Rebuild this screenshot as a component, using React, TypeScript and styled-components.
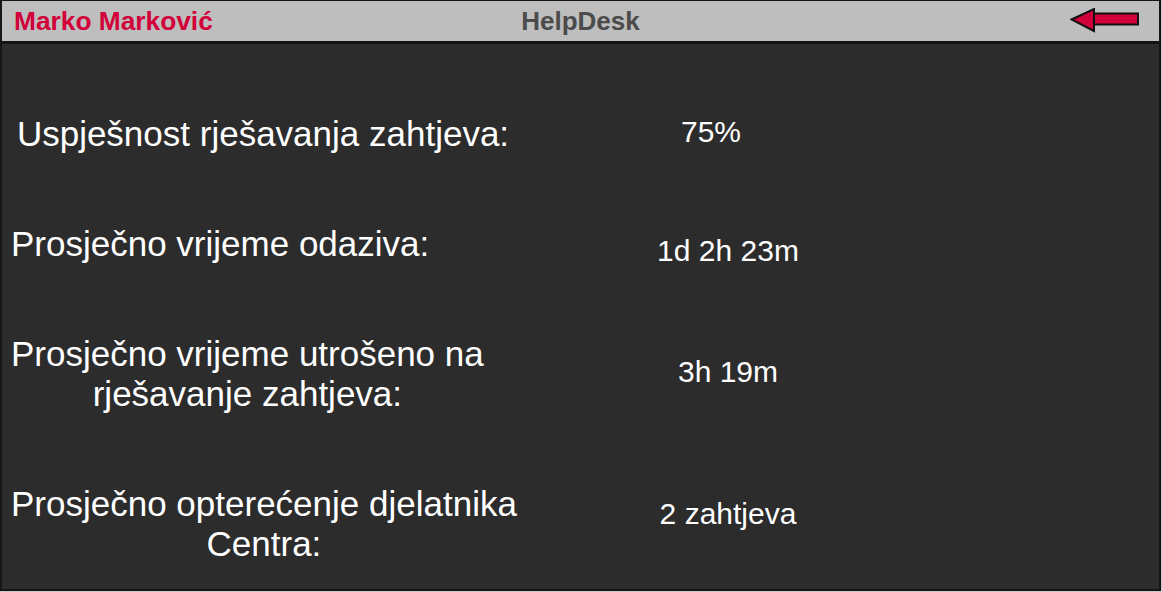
import React from "react";
import styled, { createGlobalStyle } from "styled-components";

const Global = createGlobalStyle`
  html, body { margin: 0; padding: 0; background: #c9c9c9; }
  body { font-family: "Liberation Sans", Arial, sans-serif; }
`;

const Frame = styled.div`
  box-sizing: border-box;
  width: 1161px;
  height: 591px;
  border: 2px solid #151515;
  border-top-width: 1px;
  display: flex;
  flex-direction: column;
  background: #2c2c2c;
`;

const Header = styled.header`
  box-sizing: border-box;
  height: 43px;
  flex: none;
  background: #bebebe;
  border-bottom: 3px solid #141414;
  display: grid;
  grid-template-columns: 1fr auto 1fr;
  align-items: center;
  padding: 0 12px;
`;

const UserName = styled.div`
  font-size: 26.3px;
  font-weight: bold;
  color: #d2003a;
  line-height: 30px;
`;

const AppTitle = styled.div`
  font-size: 26px;
  font-weight: bold;
  color: #4b4b4b;
  line-height: 30px;
`;

const BackButton = styled.button`
  justify-self: end;
  background: none;
  border: 0;
  padding: 0;
  margin: 0 7px 0 0;
  display: flex;
  cursor: pointer;
`;

const Body = styled.main`
  flex: 1;
  display: flex;
  flex-direction: column;
  padding: 0 0 0 9px;
`;

const Row = styled.div<{ $space: number }>`
  display: grid;
  grid-template-columns: 617px 200px;
  align-items: start;
  margin-top: ${(p) => p.$space}px;
`;

const Label = styled.div<{ $width?: number }>`
  justify-self: start;
  width: ${(p) => (p.$width ? `${p.$width}px` : "max-content")};
  font-size: 35px;
  line-height: 40px;
  color: #ffffff;
  text-align: center;
`;

const Value = styled.div<{ $top: number; $shift?: number }>`
  margin-top: ${(p) => p.$top}px;
  padding-right: ${(p) => (p.$shift ? p.$shift * 2 : 0)}px;
  font-size: 30px;
  line-height: 34px;
  color: #ffffff;
  text-align: center;
  white-space: nowrap;
`;

const BackArrow = () => (
  <svg width="70" height="26" viewBox="0 0 70 26">
    <rect x="24" y="5.5" width="44" height="11" fill="#d2003a" stroke="#111" strokeWidth="2" />
    <polygon points="1.5,11.5 24,1 24,23" fill="#d2003a" stroke="#111" strokeWidth="2" strokeLinejoin="miter" />
  </svg>
);

const stats = [
  { label: "Uspješnost rješavanja zahtjeva:", value: "75%", width: 504, top: 1, shift: 17, space: 70 },
  { label: "Prosječno vrijeme odaziva:", value: "1d 2h 23m", top: 10, space: 70 },
  { label: "Prosječno vrijeme utrošeno na\nrješavanje zahtjeva:", value: "3h 19m", top: 21, space: 66 },
  { label: "Prosječno opterećenje djelatnika\nCentra:", value: "2 zahtjeva", top: 13, space: 70 },
];

export default function App() {
  return (
    <>
      <Global />
      <Frame>
        <Header>
          <UserName>Marko Marković</UserName>
          <AppTitle>HelpDesk</AppTitle>
          <BackButton aria-label="Natrag">
            <BackArrow />
          </BackButton>
        </Header>
        <Body>
          {stats.map((s) => (
            <Row key={s.label} $space={s.space}>
              <Label $width={s.width}>
                {s.label.split("\n").map((line, i) => (
                  <div key={i}>{line}</div>
                ))}
              </Label>
              <Value $top={s.top} $shift={s.shift}>
                {s.value}
              </Value>
            </Row>
          ))}
        </Body>
      </Frame>
    </>
  );
}
